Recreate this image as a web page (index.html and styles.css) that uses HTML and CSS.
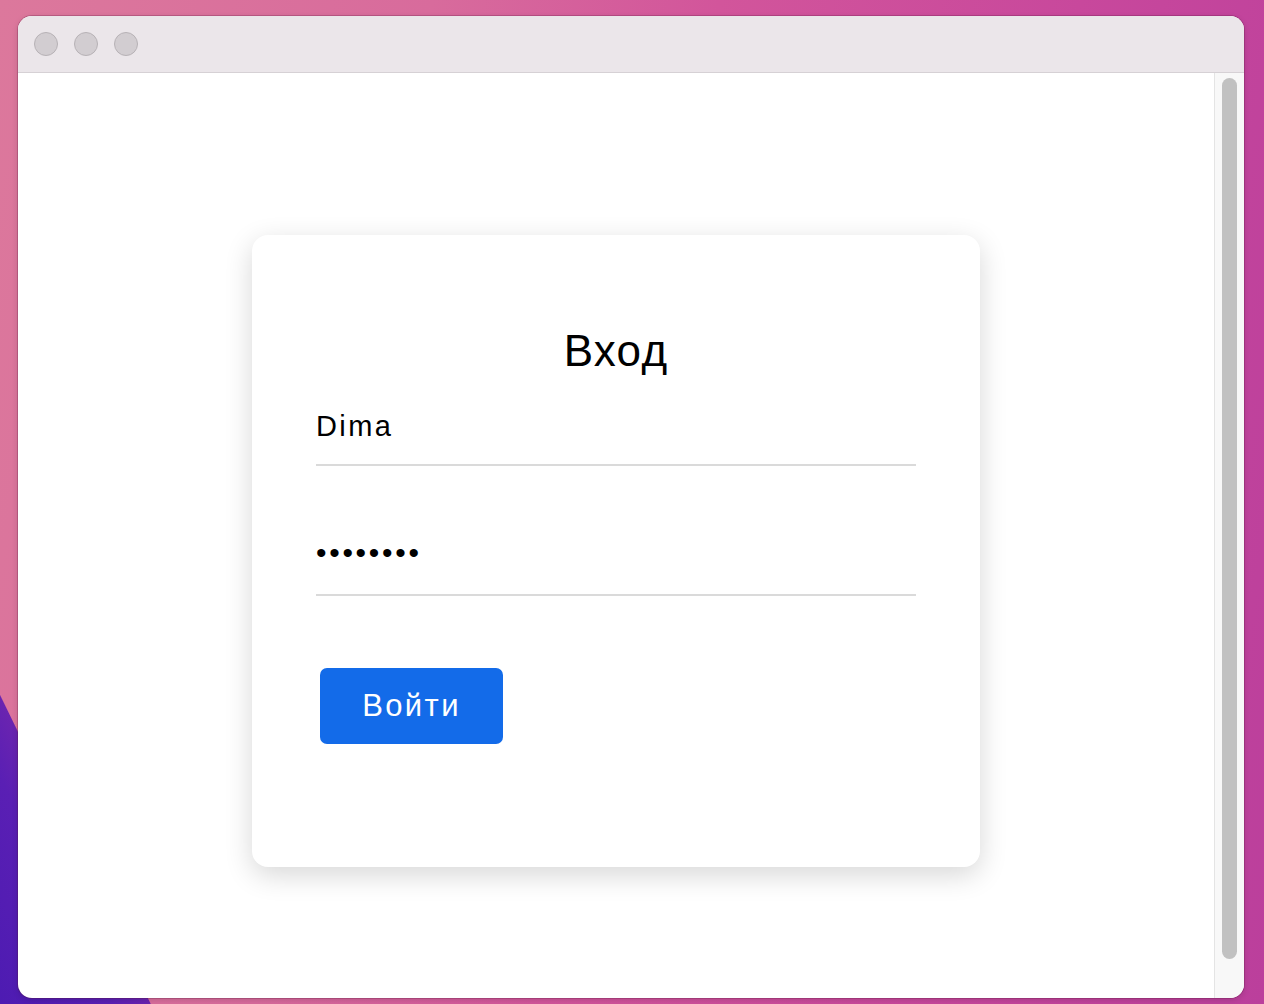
FILE: index.html
```html
<!DOCTYPE html>
<html lang="ru">
<head>
<meta charset="utf-8">
<title>Вход</title>
<link rel="stylesheet" href="styles.css">
</head>
<body>
<div class="window">
  <div class="titlebar">
    <span class="light"></span>
    <span class="light"></span>
    <span class="light"></span>
  </div>
  <div class="viewport">
    <main class="page">
      <form class="card">
        <h1 class="title">Вход</h1>
        <input class="field" type="text" value="Dima">
        <input class="field field-pass" type="password" value="12345678">
        <button class="btn" type="button">Войти</button>
      </form>
    </main>
    <div class="scrollbar"><div class="thumb"></div></div>
  </div>
</div>
</body>
</html>
```
FILE: styles.css
```css
html, body {
  margin: 0;
  height: 100%;
}
body {
  box-sizing: border-box;
  padding: 16px 20px 6px 18px;
  font-family: "Liberation Sans", Arial, sans-serif;
  background:
    linear-gradient(64deg, #4d1bb2 0px, #5a1fb4 100px, #6a24b0 135px, rgba(0,0,0,0) 136px),
    linear-gradient(100deg, #dc789c 0%, #d86b9c 30%, #d2559b 50%, #c8489c 75%, #bb3f9c 100%);
  overflow: hidden;
}
.window {
  height: 100%;
  display: flex;
  flex-direction: column;
  background: #fff;
  border-radius: 14px;
  overflow: hidden;
  box-shadow: 0 0 0 1px rgba(90, 20, 60, 0.25), 0 2px 6px rgba(0,0,0,0.15);
}
.titlebar {
  flex: 0 0 auto;
  height: 56px;
  border-bottom: 1px solid #d6d1d5;
  background: #ebe6ea;
  display: flex;
  align-items: center;
  gap: 16px;
  padding-left: 16px;
}
.light {
  width: 22px;
  height: 22px;
  border-radius: 50%;
  background: #d2cdd1;
  border: 1px solid #b7b2b6;
}
.viewport {
  flex: 1 1 auto;
  display: flex;
  min-height: 0;
}
.page {
  flex: 1 1 auto;
  display: flex;
  justify-content: center;
  align-items: flex-start;
  padding-top: 162px;
}
.scrollbar {
  flex: 0 0 30px;
  background: #f8f8f8;
  border-left: 1px solid #e4e4e4;
  padding: 5px 0 0 7px;
  box-sizing: border-box;
}
.thumb {
  width: 15px;
  height: 881px;
  border-radius: 8px;
  background: #c1c1c1;
}
.card {
  width: 728px;
  height: 632px;
  box-sizing: border-box;
  padding: 64px;
  background: #fff;
  border-radius: 16px;
  box-shadow: 0 8px 28px rgba(0,0,0,0.16);
  display: flex;
  flex-direction: column;
  align-items: flex-start;
}
.title {
  align-self: stretch;
  margin: 26px 0 0;
  font-size: 44px;
  line-height: 52px;
  font-weight: normal;
  letter-spacing: 1.3px;
  text-align: center;
  color: #000;
}
.field {
  align-self: stretch;
  box-sizing: content-box;
  margin: 33px 0 0;
  padding: 0 0 22px;
  height: 32px;
  border: 0;
  border-bottom: 2px solid #dadada;
  outline: none;
  background: transparent;
  font-family: "Liberation Sans", Arial, sans-serif;
  font-size: 29px;
  letter-spacing: 2.4px;
  color: #000;
}
.field-pass {
  margin-top: 74px;
  height: 26px;
  padding-bottom: 28px;
  font-size: 30px;
  letter-spacing: 2.7px;
}
.btn {
  margin: 72px 0 0 4px;
  width: 183px;
  height: 76px;
  border: 0;
  border-radius: 7px;
  background: #136be9;
  color: #fff;
  font-family: "Liberation Sans", Arial, sans-serif;
  font-size: 31px;
  letter-spacing: 2.4px;
  padding: 0;
}
```
